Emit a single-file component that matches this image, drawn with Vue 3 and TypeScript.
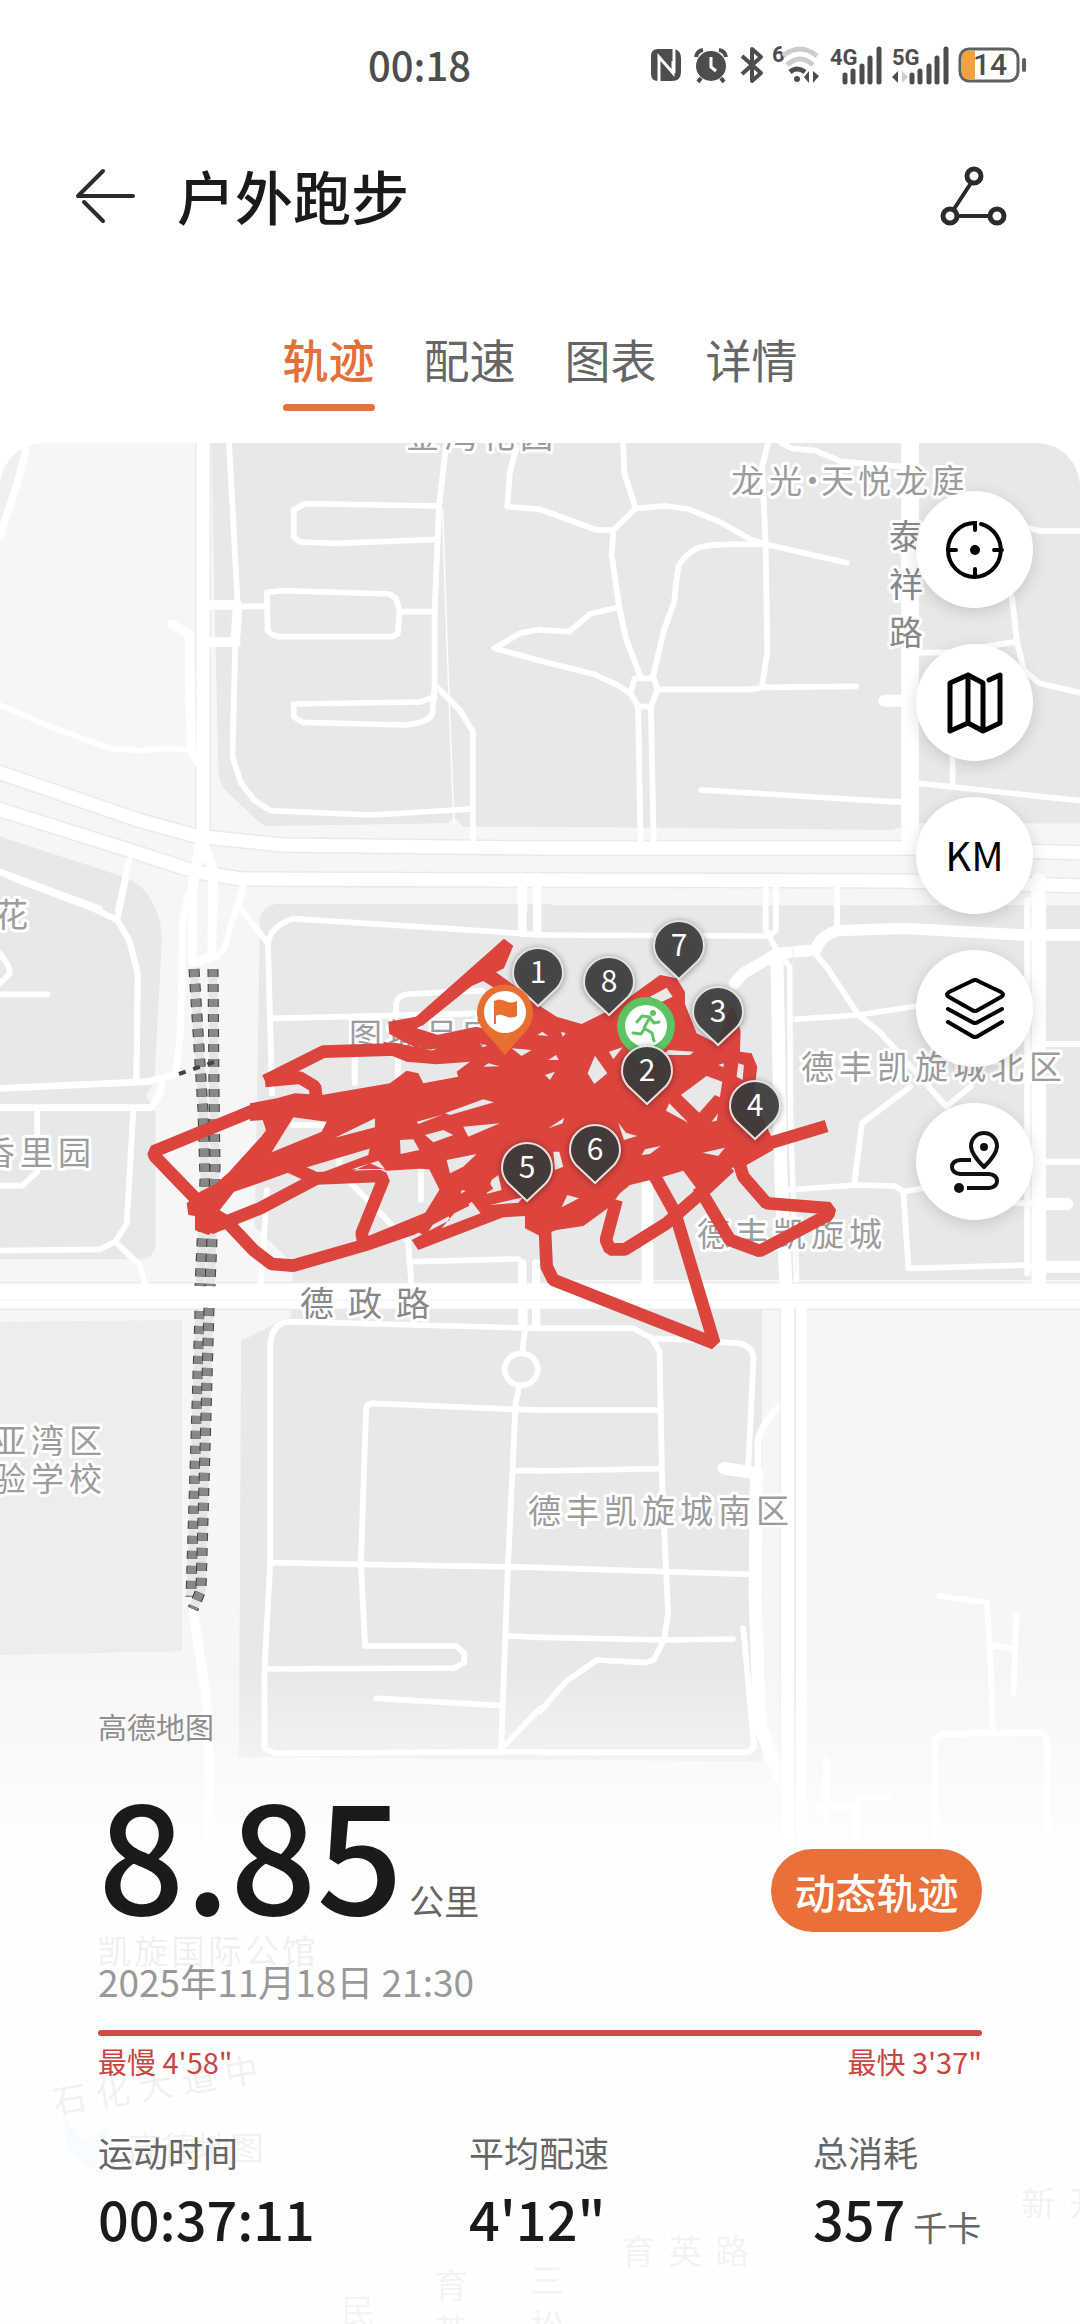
<script setup lang="ts">
import { ref } from 'vue'

interface Road { w: number; d: string }
interface Tile { x: number; y: number; blocks: string[]; roads: Road[] }
interface Label { text: string; x: number; y: number; dx?: number; dy?: number; xs?: number[]; kind?: string; rotate?: number }
interface Pin { n: number; x: number; y: number }

const tabs = ['轨迹', '配速', '图表', '详情']
const activeTab = ref('轨迹')

// Every tile covers 540 x 480 map pixels with its own 1568 x 1440 grid.
const tiles: Tile[] = [
  {
    x: 0, y: -13,
    blocks: [
      'M612 0H1600V1190H1345L1322 1165H1316L1300 1180L770 1188L745 1170L650 1075Q636 1050 634 1020Z',
      'M0 1220L370 1345L455 1440H0Z',
    ],
    roads: [
      { w: 17, d: 'M663 0L690 520M690 640L683 650L675 980L700 1060L740 1112L785 1142L1080 1155L1370 1137' },
      { w: 17, d: 'M1296 40L1275 225L1262 545V770L1255 850Q1250 875 1180 885L880 877L853 860V822L1220 816L1262 800' },
      { w: 17, d: 'M1275 228L885 221L853 240V320L870 336L980 340L1270 328' },
      { w: 17, d: 'M700 529H775M775 488L820 482L1130 492L1150 505L1160 545L1155 610L1140 620H810Q785 615 777 600ZM1160 545H1262' },
      { w: 17, d: 'M1268 770L1335 840L1373 905V1230' },
      { w: 17, d: 'M1500 50L1480 130L1473 230L1568 238M1568 598L1510 610L1435 655L1568 692' },
      { w: 4, d: 'M1285 240L1300 700L1318 1180' },
      { w: 22, d: 'M75 60L50 160L0 320' },
      { w: 17, d: 'M0 825L145 890L325 957L410 962L490 955L545 958M375 1290L342 1440M0 1325L290 1435M708 1365L690 1440' },
      { w: 28, d: 'M500 583L550 615L555 960L585 1010M608 525H690L683 636H608M580 1240L550 1440M595 1250L618 1320V1440' },
      { w: 28, d: 'M1517 1350V1440' },
    ],
  },
  {
    x: 540, y: -13,
    blocks: ['M-10 0H1048V1190L1020 1200L-10 1190Z', 'M1100 0H1568V1180H1100Z'],
    roads: [
      { w: 17, d: 'M240 0L245 130L278 235L365 228L430 237L520 275L615 330L655 343L890 398' },
      { w: 17, d: 'M0 238L165 300H213L278 235M213 300L208 375L230 530L248 620L292 740' },
      { w: 17, d: 'M0 600L85 605L145 552L228 532' },
      { w: 17, d: 'M655 343H540Q470 345 450 358Q410 385 402 410Q395 450 390 515L360 600L328 740' },
      { w: 17, d: 'M662 39L645 110L655 343L660 665L645 768M342 778H610L650 772L918 769' },
      { w: 17, d: 'M275 745H330L342 778L322 830H285L263 790ZM0 692L155 732L225 765L263 790' },
      { w: 17, d: 'M285 830L292 1240M322 830L330 1240M468 1080L1015 1115H1050' },
      { w: 17, d: 'M700 39L730 55L800 62L875 95L1050 110' },
      { w: 17, d: 'M1100 668H1180L1385 635M1370 500L1385 635L1405 720L1450 760L1568 788M1410 290L1450 303H1568' },
      { w: 17, d: 'M1198 980V1070M1100 1060L1568 1112' },
      { w: 36, d: 'M1000 812H1050' },
      { w: 50, d: 'M1075 0V1240' },
    ],
  },
  {
    x: 0, y: 437,
    blocks: [
      'M0 -130L370 -5L410 20Q470 90 470 180L450 570Q450 620 420 650H0Z',
      'M0 640H420L452 700L452 1100Q440 1140 410 1138H0Z',
      'M800 72H1600V1220H850V1150L740 1040L755 110Q765 80 800 72Z',
    ],
    roads: [
      { w: 18, d: 'M0 -25L50 0L270 85L340 120L375 180L400 280L396 605M365 0L340 120' },
      { w: 20, d: 'M0 625L430 605L520 580M0 683H440L465 640L470 600' },
      { w: 20, d: 'M548 40L530 120L525 440L512 570' },
      { w: 26, d: 'M558 -10V245M618 -10L615 225M562 248L630 225' },
      { w: 17, d: 'M708 0L690 70L650 210L620 230M690 75L778 190L790 640M775 930L757 1220' },
      { w: 17, d: 'M778 190Q785 140 850 116L1510 160L1568 165' },
      { w: 17, d: 'M790 415L1390 400M1150 405V370Q1155 345 1185 342L1400 332M1030 415V610M1155 520V600' },
      { w: 17, d: 'M108 685V875L65 917H0M387 690L368 1030L335 1085L290 1108L0 1112M335 1085L405 1155L420 1210' },
      { w: 17, d: 'M0 343H138M0 220Q30 260 28 280L0 310' },
      { w: 17, d: 'M850 735H950M985 820V870M1010 900L1185 1085L1195 1220M1197 1145L1505 1137M1222 850V960' },
      { w: 24, d: 'M1517 -10V160M1560 -10V160M1517 1150V1330M1557 1150V1280' },
    ],
  },
  {
    x: 540, y: 437,
    blocks: ['M-10 76H1568V1200H-10Z'],
    roads: [
      { w: 34, d: 'M565 310L590 280L690 220L800 210Q815 165 865 152L1060 145L1400 165H1568' },
      { w: 17, d: 'M0 165L665 168L690 215M655 20V150L670 165M685 20V150L670 165M863 20V150' },
      { w: 38, d: 'M688 240L700 900L715 1230' },
      { w: 16, d: 'M690 215L725 260L727 700L745 1200' },
      { w: 17, d: 'M795 215L835 265L925 405L985 455L1060 540L1180 680L1250 620M735 418L925 405L1095 378' },
      { w: 17, d: 'M1075 620L935 730L912 915M720 930L920 915L1030 918L1055 935L1070 1165L1420 1155M1055 935L1110 925' },
      { w: 18, d: 'M1415 60V1180M1470 492H1568M1470 845H1568M1380 970H1440' },
      { w: 42, d: 'M1448 0V1220' },
      { w: 36, d: 'M1450 972H1530M1440 1160H1568' },
      { w: 34, d: 'M312 900V1220' },
    ],
  },
  {
    x: 0, y: 857,
    blocks: ['M845 20H1600V1380L694 1370L700 123L820 60L845 50Z'],
    roads: [
      { w: 17, d: 'M1568 85L840 65Q790 70 785 130V780L768 1110V1345L800 1360L1568 1355' },
      { w: 17, d: 'M1525 85L1517 150M1508 258L1497 310L1475 800L1455 1345' },
      { w: 17, d: 'M1513 160a48 48 0 1 0 1 0Z' },
      { w: 17, d: 'M1568 330L1500 328L1080 310Q1065 312 1063 325L1048 790L1060 1038H1325L1348 1060V1088L1320 1104L778 1107' },
      { w: 17, d: 'M790 788L1050 793L1568 802M1495 512H1568M1475 1008L1568 1012M1093 1195L1455 1217M1462 1340L1568 1225' },
      { w: 28, d: 'M562 940L600 1200L608 1440V1900' },
      { w: 24, d: 'M1520 -30V80M1557 -30V80' },
    ],
  },
  {
    x: 540, y: 857,
    blocks: ['M-10 20H645V1385L-10 1378Z'],
    roads: [
      { w: 17, d: 'M0 85H270L325 115L347 155L355 560L372 940L360 1020L330 1080L305 1088L165 1080L75 1145L0 1235' },
      { w: 17, d: 'M325 115L440 120L580 130Q615 140 620 170L605 500M0 330H345M0 513L350 506M0 803L610 823' },
      { w: 17, d: 'M0 1012L370 1020L560 1017M0 1357H605L622 1340L590 985' },
      { w: 38, d: 'M535 505L630 520M628 520L625 900L638 1280L710 1460' },
      { w: 20, d: 'M633 500V420Q645 370 690 325L710 320' },
      { w: 38, d: 'M720 -20V1900' },
      { w: 30, d: 'M759 -20V1900' },
      { w: 17, d: 'M1160 888L1298 908L1308 1090L1315 1295M1308 1035L1380 1048M1383 945L1375 1180' },
      { w: 20, d: 'M1165 1302L1455 1297Q1475 1310 1473 1330V1600L1450 1625H1165L1147 1600V1320ZM832 1380V1560M810 1520H920M920 1640V1500L940 1490H1010' },
    ],
  },
]

const highways: Road[] = [
  { w: 13, d: 'M203 -5V420' },
  { w: 13, d: 'M-5 328L138 377L196 393L282 402L540 405L905 405L1085 410' },
  { w: 13, d: 'M-5 365L138 410L196 429L241 436L540 437L900 438L1085 443' },
  { w: 25, d: 'M-5 853H1085' },
]

const rails = [
  'M194 526L203 667L205 737L200 843',
  'M213 526L214 644L215 724L210 843',
  'M200 868L191 1154',
  'M209 865L201 1147L193 1166',
]

const labels: Label[] = [
  { text: '金湾花园', x: 406, y: 5, dx: 38 },
  { text: '龙光·天悦龙庭', x: 731, y: 50, xs: [731, 769, 796, 821, 858, 895, 932] },
  { text: '泰祥路', x: 889, y: 106, dx: 0, dy: 48, kind: 'street' },
  { text: '花', x: -5, y: 484 },
  { text: '香里园', x: -18, y: 722, dx: 38 },
  { text: '图埔吕家', x: 349, y: 604, dx: 38 },
  { text: '德丰凯旋城北区', x: 801, y: 636, dx: 38 },
  { text: '德丰凯旋城', x: 697, y: 803, dx: 38 },
  { text: '德政路', x: 300, y: 873, dx: 48, kind: 'street' },
  { text: '亚湾区', x: -7, y: 1010, dx: 38 },
  { text: '验学校', x: -7, y: 1048, dx: 38 },
  { text: '德丰凯旋城南区', x: 528, y: 1080, dx: 38 },
  { text: '凯旋国际公馆', x: 97, y: 1521, dx: 37, kind: 'deep' },
  { text: '石化大道中', x: 55, y: 1672, dx: 43, dy: -7, rotate: -10, kind: 'deep' },
  { text: '高德地图', x: 128, y: 1718, dx: 34, kind: 'deep' },
  { text: '育英路', x: 621, y: 1821, dx: 47, kind: 'deep' },
  { text: '育英', x: 434, y: 1855, dx: 0, dy: 46, kind: 'deep' },
  { text: '三松', x: 530, y: 1850, dx: 0, dy: 46, kind: 'deep' },
  { text: '民', x: 341, y: 1881, kind: 'deep' },
  { text: '新开', x: 1021, y: 1773, dx: 48, kind: 'deep' },
]

// Track geometry is stored at three units per map pixel.
const trackArea =
  'M360 610L440 595L495 580L575 585L780 550L830 512L865 520L880 550L985 530L980 515L1020 485L920 493L830 485L780 465L760 425L860 445L920 405L1040 380L1110 400L1200 300L1225 315L1280 350L1355 372L1440 330L1500 290L1590 225L1640 235L1665 275L1665 312L1700 400L1760 430L1800 320L1815 325L1832 395L1830 455L1865 460L1882 500L1875 560L1890 640L1925 710L1930 750L1850 795L1800 805L1735 860L1710 880L1660 812L1600 830L1500 855L1470 880L1440 920L1360 978L1280 990L1230 1008L1185 985L1185 948L1120 952L865 1050L845 1020L960 960L940 900L930 810L870 806L770 812L720 790L600 845L520 840L450 808L300 878L265 925L265 985L235 1005L195 990L195 948L175 945L170 910L210 875L300 830L400 720L408 690L398 660L360 663Z' +
  'M490 652L590 665L575 695L425 757ZM735 655L735 682L615 713ZM520 797L720 740L715 765L570 820ZM665 808L745 782L765 806ZM810 720L850 718L868 750L812 762ZM885 705L940 690L970 705L910 727ZM1000 680L1110 670L1015 710ZM945 640L1060 598L1092 607L960 645ZM860 665L935 645L865 672ZM950 780L1040 762L1000 800L960 820Z' +
  'M880 450L925 445L885 458ZM1050 430L1072 437L1055 442ZM1060 500L1075 490L1110 499ZM995 870L1020 875L1025 905L1052 940L935 985L985 925ZM1085 840L1105 825L1115 870L1070 882ZM1080 915L1180 892L1165 908ZM1145 445L1205 450L1175 468ZM1222 405L1237 395L1255 408ZM1293 395L1308 400L1298 410ZM1245 525L1275 515L1260 540ZM1255 480L1278 465L1287 480Z' +
  'M1395 467L1432 520L1393 552L1373 520ZM1560 290L1610 263L1628 290L1590 308ZM1437 455L1478 442L1450 478ZM1615 450L1692 455L1680 465L1600 465ZM1653 585L1730 528L1777 545L1770 592L1755 585L1708 638ZM1618 610L1675 668L1608 632ZM1825 490L1842 495L1838 540L1820 530ZM1255 685L1303 653L1298 670ZM1465 668L1488 698L1522 708L1482 720Z' +
  'M1535 765L1545 748L1592 738L1560 762ZM1718 758L1785 743L1765 768ZM1270 755L1288 755L1300 800L1275 810ZM1295 922L1312 885L1347 895ZM1745 665L1765 640L1760 662ZM1765 495L1782 490L1780 502Z'

const trackTop = 'M1122 116L1150 137L1122 205L1098 217L1200 290L1150 300L1060 243L1025 258L880 375L860 385L925 405L860 445L778 402L775 365L858 350Z'

const trackLines = [
  'M405 543L580 455L800 448L900 470',
  'M405 543L510 533L555 560L560 600',
  'M440 625L375 630L70 755L75 770L230 930L290 965L370 1050L425 1092L490 1097L705 1035L850 985L950 930L1080 850',
  'M240 985L390 925L560 835L745 828L762 835L695 1000L700 1025',
  'M230 950L300 860L470 800L740 720',
  'M220 910L310 830L410 720L480 630',
  'M905 780L950 870L870 1000',
  'M700 1035L920 945L1010 900',
  'M1575 830L1635 938L1753 1330L1270 1140L1250 1100L1245 990',
  'M1460 900L1428 1020L1440 1048H1485L1610 970L1730 865L1800 800',
  'M1705 860L1800 1020L1890 1053L2095 945L2100 925L1910 910L1840 830L1825 780',
  'M1800 765L2090 678',
]

const pins: Pin[] = [
  { n: 1, x: 538, y: 563 },
  { n: 8, x: 609, y: 572 },
  { n: 7, x: 679, y: 536 },
  { n: 3, x: 718, y: 602 },
  { n: 4, x: 755, y: 696 },
  { n: 2, x: 647, y: 661 },
  { n: 5, x: 527, y: 758 },
  { n: 6, x: 595, y: 740 },
]

const chars = (l: Label) =>
  [...l.text].map((c, i) => ({
    c,
    x: l.xs ? l.xs[i] : l.x + i * (l.dx ?? 0),
    y: l.y + i * (l.dy ?? 0),
  }))
</script>

<template>
  <div class="page">
    <header class="status">
      <time class="clock">00:18</time>
      <div class="status-icons">
        <svg width="32" height="34" viewBox="0 0 32 34">
          <path d="M8 1h14q9 0 9 9v14q0 9-9 9H8q-7 0-7-7V8q0-7 7-7Z" fill="#4d4d4d" />
          <path d="M9 33V9L23 25V13M9 9L23 25M24 1V25" fill="none" stroke="#fff" stroke-width="3" />
        </svg>
        <svg width="34" height="34" viewBox="0 0 34 34">
          <circle cx="17" cy="18" r="15" fill="#4d4d4d" />
          <path d="M2 9Q3 3 9 2M32 9Q31 3 25 2M7 30l-3 4M27 30l3 4" stroke="#4d4d4d" stroke-width="4" fill="none" />
          <path d="M17 9v10l5 4" stroke="#fff" stroke-width="3" fill="none" />
        </svg>
        <svg width="24" height="36" viewBox="0 0 24 36">
          <path d="M2 9l19 17-9 8V2l9 8L2 27" fill="none" stroke="#4d4d4d" stroke-width="4" stroke-linejoin="round" />
        </svg>
        <svg width="50" height="38" viewBox="0 0 50 38">
          <text x="0" y="16" class="tiny">6</text>
          <path d="M11 10Q28-4 45 10" fill="none" stroke="#ccc" stroke-width="5" />
          <path d="M15 19Q28 7 41 19" fill="none" stroke="#ccc" stroke-width="5" />
          <path d="M18 26Q25 20 33 26" fill="none" stroke="#4d4d4d" stroke-width="5" />
          <circle cx="25" cy="33" r="3" fill="#4d4d4d" />
          <path d="M37 25v12l-5-6ZM41 25v12l6-7Z" fill="#4d4d4d" />
        </svg>
        <svg width="54" height="38" viewBox="0 0 54 38">
          <text x="0" y="19" class="tiny">4G</text>
          <path d="M15 29v7M23 25v11M32 20v16M40 12v24M49 3v33" stroke="#4d4d4d" stroke-width="5" stroke-linecap="round" />
        </svg>
        <svg width="58" height="38" viewBox="0 0 58 38">
          <text x="0" y="19" class="tiny">5G</text>
          <path d="M6 25v12l-6-6Z" fill="#4d4d4d" /><path d="M10 25v12l6-6Z" fill="#ccc" />
          <path d="M20 29v7M28 25v11M37 20v16M45 12v24M54 3v33" stroke="#4d4d4d" stroke-width="5" stroke-linecap="round" />
        </svg>
        <svg width="70" height="36" viewBox="0 0 70 36">
          <rect x="2" y="2" width="58" height="32" rx="9" fill="#fff" stroke="#606060" stroke-width="3" />
          <path d="M10 4h7v28h-7q-6 0-6-6V10q0-6 6-6Z" fill="#f2a13c" />
          <path d="M66 13v10" stroke="#606060" stroke-width="4" stroke-linecap="round" />
          <text x="15" y="28" class="charge">14</text>
        </svg>
      </div>
    </header>

    <nav class="titlebar">
      <button class="plain" type="button" aria-label="返回">
        <svg width="60" height="56" viewBox="0 0 60 56">
          <path d="M28 3L3 28M9 34L28 53M3 28H58" fill="none" stroke="#2b2b2b" stroke-width="4" stroke-linecap="round" />
        </svg>
      </button>
      <h1>户外跑步</h1>
      <button class="plain share" type="button" aria-label="分享">
        <svg width="68" height="60" viewBox="0 0 68 60" fill="none" stroke="#2b2b2b" stroke-width="5">
          <circle cx="35" cy="10" r="7" /><circle cx="11" cy="50" r="7" /><circle cx="58" cy="50" r="7" />
          <path d="M32 17L15 43M18 50H51" stroke-width="4" />
        </svg>
      </button>
    </nav>

    <div class="tabs" role="tablist">
      <button
        v-for="t in tabs" :key="t" type="button" role="tab" class="tab"
        :class="{ active: t === activeTab }" :aria-selected="t === activeTab" @click="activeTab = t"
      >{{ t }}</button>
    </div>

    <main class="map">
      <svg class="canvas" viewBox="0 0 1080 1881" preserveAspectRatio="xMidYMin slice">
        <rect width="1080" height="1881" fill="#f7f5f6" />
        <path d="M0 0H28L0 80Z" fill="#eef1f0" />
        <path d="M0 879L182 877V1208L0 1212Z" fill="#ebeeec" />
        <g v-for="t in tiles" :key="`b${t.x}-${t.y}`" :transform="`translate(${t.x} ${t.y}) scale(${540 / 1568} ${480 / 1440})`">
          <path v-for="b in t.blocks" :key="b" :d="b" fill="#e8e8e8" />
        </g>
        <g class="line">
          <path v-for="h in highways" :key="h.d" :d="h.d" stroke="#e8ebea" :stroke-width="h.w + 3" />
        </g>
        <g v-for="t in tiles" :key="`r${t.x}-${t.y}`" class="line round" :transform="`translate(${t.x} ${t.y}) scale(${540 / 1568} ${480 / 1440})`">
          <path v-for="r in t.roads" :key="r.d" :d="r.d" stroke="#fff" :stroke-width="r.w" />
        </g>
        <g class="line">
          <path v-for="h in highways" :key="h.d" :d="h.d" stroke="#fff" :stroke-width="h.w" />
          <path d="M780 865V1400M793 500L796 830" stroke="#eceeee" stroke-width="1" />
          <path d="M795 865V1440" stroke="#ebedee" stroke-width="2" />
          <path d="M-5 857H1085" stroke="#f2f3f3" stroke-width="1" />
        </g>
        <g class="line">
          <g v-for="r in rails" :key="r">
            <path :d="r" stroke="#e6e6e6" stroke-width="9" />
            <path :d="r" stroke="#3f3f3f" stroke-width="11" stroke-dasharray="8 7" />
            <path :d="r" stroke="#888" stroke-width="9" stroke-dasharray="8 7" />
          </g>
          <path d="M179 631L214 619" stroke="#444" stroke-width="4" stroke-dasharray="7 8" />
        </g>

        <g v-for="(l, i) in labels" :key="i" class="label" :class="l.kind">
          <text>
            <tspan v-for="(c, j) in chars(l)" :key="j" :x="c.x" :y="c.y" :rotate="l.rotate ?? 0">{{ c.c }}</tspan>
          </text>
        </g>
        <path d="M64 1672L82 1700L110 1682L100 1732L66 1706Z" fill="#8ec5f2" />

        <g transform="translate(130 457) scale(.3333)" fill="#dc443e">
          <path :d="trackArea" fill-rule="evenodd" />
          <path :d="trackTop" />
          <path v-for="l in trackLines" :key="l" :d="l" fill="none" stroke="#dc443e" stroke-width="38" stroke-linejoin="bevel" />
        </g>

        <g transform="translate(646 583)">
          <path d="M0 42L-20 21A29 29 0 1 1 20 21Z" fill="#5cc463" />
          <circle r="21" fill="#fff" />
          <circle cx="7" cy="-13" r="3" fill="#5cc463" />
          <path d="M-9-4L-4-10L4-9L-2 2L6 7L8 15M4-8L8-3L13-4M-1 2L-5 8L-13 7" fill="none" stroke="#5cc463" stroke-width="3" stroke-linecap="round" stroke-linejoin="round" />
        </g>
        <g v-for="p in pins" :key="p.n" class="pin" :transform="`translate(${p.x} ${p.y})`">
          <path d="M0 0L-19-18Q-25-25-25-33A25 25 0 1 1 25-33Q25-25 19-18Z" />
          <text y="-23">{{ p.n }}</text>
        </g>
        <g transform="translate(505 569)">
          <path d="M0 43L-21 19A28 28 0 1 1 21 19Z" fill="#e96f30" />
          <circle r="21" fill="#fff" />
          <path d="M-11 12V-11Q-5-14 0-11T12-11V4Q6 7 0 4T-9 4V12Z" fill="#e96f30" />
        </g>
      </svg>

      <div class="tools">
        <button type="button" aria-label="定位">
          <svg width="60" height="64" viewBox="0 0 60 64" fill="none" stroke="#000" stroke-width="4" stroke-linecap="round">
            <path d="M36 6A27 27 0 0 1 30 59A27 27 0 0 1 30 5V12M3 32H11M49 32H57M30 59V51" />
            <circle cx="30" cy="32" r="5" fill="#000" stroke="none" />
          </svg>
        </button>
        <button type="button" aria-label="地图">
          <svg width="60" height="64" viewBox="0 0 60 64" fill="none" stroke="#000" stroke-width="5" stroke-linejoin="round" stroke-linecap="round">
            <path d="M5 12L23 4L38 12V60L23 52L5 60ZM23 4V52M38 60L55 52V4L44 9" />
          </svg>
        </button>
        <button type="button" class="km">KM</button>
        <button type="button" aria-label="图层">
          <svg width="60" height="64" viewBox="0 0 60 64" fill="none" stroke="#000" stroke-width="4" stroke-linejoin="round" stroke-linecap="round">
            <path d="M27 4Q30 2 33 4L56 15Q60 18 56 20L33 33Q30 35 27 33L4 20Q0 18 4 15ZM3 32L27 45Q30 47 33 45L57 32M3 45L27 59Q30 61 33 59L57 45" />
          </svg>
        </button>
        <button type="button" aria-label="路线">
          <svg width="60" height="64" viewBox="0 0 60 64" fill="none" stroke="#111" stroke-width="4" stroke-linejoin="round">
            <path d="M39 37Q26 24 26 16A13 13 0 0 1 52 16Q52 24 39 37ZM26 30H15Q7 31 7 37T15 44H44Q52 45 52 51T44 58H22" />
            <circle cx="39" cy="17" r="4" fill="#111" stroke="none" /><circle cx="14" cy="58" r="5" fill="#111" stroke="none" />
          </svg>
        </button>
      </div>

      <section class="summary">
        <p class="source">高德地图</p>
        <div class="headline">
          <p class="distance"><strong>8.85</strong><span>公里</span></p>
          <button class="replay" type="button">动态轨迹</button>
        </div>
        <time class="date">2025年11月18日 21:30</time>
        <div class="pace-bar"></div>
        <div class="pace"><span>最慢 4'58"</span><span>最快 3'37"</span></div>
        <dl class="stats">
          <div><dt>运动时间</dt><dd>00:37:11</dd></div>
          <div><dt>平均配速</dt><dd>4'12"</dd></div>
          <div><dt>总消耗</dt><dd>357<small>千卡</small></dd></div>
        </dl>
      </section>
    </main>
  </div>
</template>

<style>
body { background: #fff; }
</style>

<style scoped>
.page {
  display: flex;
  flex-direction: column;
  min-height: 100vh;
  background: #fff;
  color: #1a1a1a;
  font-family: "Noto Sans CJK SC", "Noto Sans", sans-serif;
}
.page * { box-sizing: border-box; }
p, h1, dl, dd { margin: 0; }
button { font-family: inherit; border: 0; padding: 0; cursor: pointer; }
svg { display: block; }

.status {
  display: flex;
  align-items: center;
  justify-content: space-between;
  height: 130px;
  padding: 0 52px 0 368px;
}
.clock { padding-bottom: 2px; font-size: 40px; line-height: 44px; font-weight: 500; color: #4d4d4d; }
.status-icons { display: flex; align-items: center; gap: 12px; }
.status-icons svg { overflow: visible; }
.status-icons svg:nth-child(n + 4) { margin-left: -4px; }
.tiny { font-family: Roboto, sans-serif; font-size: 22px; font-weight: 700; fill: #4d4d4d; }
.charge { font-family: Roboto, sans-serif; font-size: 30px; font-weight: 500; fill: #4d4d4d; }

.titlebar { display: flex; align-items: center; height: 132px; padding: 0 73px 0 75px; }
.titlebar h1 { margin-left: 42px; padding-bottom: 2px; font-size: 58px; line-height: 80px; font-weight: 500; }
.plain { background: none; }
.share { margin-left: auto; }

.tabs { display: flex; justify-content: center; gap: 49px; height: 181px; padding-top: 59px; }
.tab {
  position: relative;
  height: 90px;
  padding-bottom: 17px;
  background: none;
  font-size: 46px;
  line-height: 60px;
  color: #666;
}
.tab.active { color: #e36f39; font-weight: 500; }
.tab.active::after {
  content: "";
  position: absolute;
  left: 0;
  right: 0;
  bottom: 0;
  height: 7px;
  border-radius: 4px;
  background: #e96f38;
}

.map {
  position: relative;
  display: flex;
  flex: 1;
  flex-direction: column;
  overflow: hidden;
  border-radius: 44px 44px 0 0;
}
.canvas { position: absolute; inset: 0; width: 100%; height: 100%; }
.line { fill: none; }
.round { stroke-linecap: round; stroke-linejoin: round; }
.label { font-size: 33px; fill: #9c9c9c; stroke: #fff; stroke-width: 6px; stroke-linejoin: round; paint-order: stroke; }
.label.street { font-size: 34px; fill: #888; }
.label.deep { font-size: 34px; fill: #222; }
.pin path { fill: rgba(60, 60, 60, 0.9); stroke: #e6e2e2; stroke-width: 2px; filter: drop-shadow(0 1px 3px rgba(0, 0, 0, 0.4)); }
.pin text { fill: #fff; font-size: 30px; text-anchor: middle; }

.tools { position: relative; display: flex; flex-direction: column; align-self: flex-end; gap: 36px; margin: 48px 47px 0 0; }
.tools button {
  display: flex;
  align-items: center;
  justify-content: center;
  width: 117px;
  height: 117px;
  border-radius: 50%;
  background: #fff;
  box-shadow: 0 4px 16px rgba(0, 0, 0, 0.14);
}
.tools .km { padding-bottom: 4px; font-size: 40px; color: #000; }

.summary {
  position: relative;
  margin-top: auto;
  padding: 42px 98px 76px;
  background: linear-gradient(rgba(255, 255, 255, 0), rgba(255, 255, 255, 0.5) 100px, rgba(255, 255, 255, 0.85) 170px, rgba(255, 255, 255, 0.93) 260px, rgba(255, 255, 255, 0.95));
}
.source { font-size: 29px; line-height: 32px; color: #8e8e8e; }
.headline { display: flex; align-items: flex-end; justify-content: space-between; height: 190px; }
.distance { display: flex; align-items: baseline; gap: 6px; line-height: 166px; }
.distance strong { font-size: 152px; font-weight: 500; }
.distance span { font-size: 35px; line-height: 44px; color: #666; }
.replay {
  width: 211px;
  height: 83px;
  border-radius: 42px;
  background: #e97038;
  color: #fff;
  font-size: 41px;
  font-weight: 500;
}
.date { display: block; margin-top: 27px; font-size: 37px; line-height: 44px; color: #999; }
.pace-bar { height: 6px; margin-top: 27px; border-radius: 3px; background: #d64a46; }
.pace { display: flex; justify-content: space-between; margin-top: 7px; font-size: 29px; line-height: 36px; color: #cb4540; }
.stats { display: grid; grid-template-columns: 371fr 344fr 169fr; margin-top: 49px; white-space: nowrap; }
.stats dt { font-size: 35px; line-height: 48px; color: #666; }
.stats dd { margin-top: 12px; font-size: 54px; line-height: 60px; font-weight: 500; }
.stats small { margin-left: 8px; font-size: 34px; font-weight: 400; line-height: 40px; color: #666; }
</style>
